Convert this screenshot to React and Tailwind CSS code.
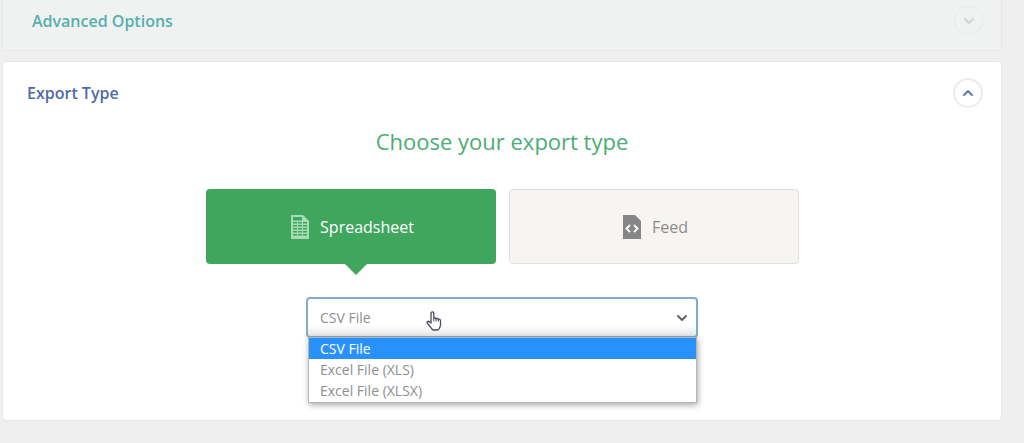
import React, { useState } from "react";
import { FiChevronDown, FiChevronUp } from "react-icons/fi";

const FORMATS = ["CSV File", "Excel File (XLS)", "Excel File (XLSX)"];

function SpreadsheetIcon() {
  return (
    <svg viewBox="0 0 18 24" className="h-6 w-[18px]" aria-hidden="true">
      <path fill="#a5dcb4" d="M0 0h12l6 6v18H0z" />
      <g fill="#41a65d">
        <path d="M2 2h9v3.500H2z" />
        {[7, 10, 13, 16, 19].map((y) => (
          <path
            key={y}
            d={`M2 ${y}h4v1.500H2zM7 ${y}h4v1.500H7zM12 ${y}h4v1.500h-4z`}
          />
        ))}
      </g>
    </svg>
  );
}

function FeedIcon() {
  return (
    <svg viewBox="0 0 18 24" className="h-6 w-[18px]" aria-hidden="true">
      <path fill="#868686" d="M0 0h12l6 6v18H0z" />
      <path
        d="M7 10l-3.500 3.500L7 17M11 10l3.500 3.500L11 17"
        fill="none"
        stroke="#f6f5f1"
        strokeWidth="2"
      />
    </svg>
  );
}

function HandCursor() {
  return (
    <svg viewBox="0 0 16 20" className="h-5 w-4" aria-hidden="true">
      <path
        d="M5 12V2.300a1.400 1.400 0 0 1 2.800 0V7.500c.3-1 2.200-.9 2.300.4.5-.8 2-.6 2.200.6.6-.6 2.200-.4 2.200 1.100v4.200c0 1.800-.9 2.600-1.200 3.600-.3 1-1 1.600-2 1.600H7.700c-1.200 0-1.700-.6-2.200-1.600L1.300 12c-.8-1.300.9-2.300 1.900-1.300z"
        fill="#fff"
        stroke="#4b4b57"
        strokeWidth="1.300"
        strokeLinejoin="round"
      />
      <path d="M7.800 7.500v3M10.100 8v2.500M12.300 8.700v2" stroke="#4b4b57" />
    </svg>
  );
}

export default function App() {
  const [type, setType] = useState("spreadsheet");
  const [format, setFormat] = useState("CSV File");
  const [open, setOpen] = useState(true);

  return (
    <div className="min-h-screen bg-[#efefef] pl-[2px] pr-[22px] font-['Open_Sans','Noto_Sans',sans-serif]">
      {/* Advanced Options */}
      <section className="flex items-start justify-between rounded-b border border-t-0 border-[#e6e7e7] bg-[#f0f2f1] pt-[6px] pr-[18px] pb-[15px] pl-[29px]">
        <h2 className="pt-1 text-[16px] leading-[22px] font-semibold text-[#55b0ac]">
          Advanced Options
        </h2>
        <button
          aria-label="Expand Advanced Options"
          className="flex h-[29px] w-[29px] items-center justify-center rounded-full border border-[#e9e9e8] text-[#d2d5d3]"
        >
          <FiChevronDown className="h-4 w-4" strokeWidth={3} />
        </button>
      </section>

      {/* Export Type */}
      <section className="mt-[10px] rounded border border-[#e7e7e7] bg-white pb-[82px]">
        <div className="flex items-center justify-between pt-4 pr-[18px] pl-6">
          <h2 className="text-[16px] leading-[22px] font-semibold text-[#4f6ba3]">
            Export Type
          </h2>
          <button
            aria-label="Collapse Export Type"
            className="flex h-[30px] w-[30px] items-center justify-center rounded-full border-2 border-[#ececec] text-[#6079b0]"
          >
            <FiChevronUp className="h-4 w-4" strokeWidth={3} />
          </button>
        </div>

        <h1 className="mt-[18px] text-center text-[22px] leading-[30px] text-[#4bad73]">
          Choose your export type
        </h1>

        <div className="mx-auto mt-[33px] grid max-w-[593px] grid-cols-2 gap-[13px]">
          <button
            onClick={() => setType("spreadsheet")}
            aria-pressed={type === "spreadsheet"}
            className="relative flex h-[75px] items-center justify-center gap-[11px] rounded bg-[#41a65d] pl-1 text-[16px] text-white"
          >
            <SpreadsheetIcon />
            Spreadsheet
            <svg
              viewBox="0 0 22 11"
              className="absolute top-full left-[139px] h-[11px] w-[22px]"
              aria-hidden="true"
            >
              <path fill="#41a65d" d="M0 0h22L11 11z" />
            </svg>
          </button>
          <button
            onClick={() => setType("feed")}
            aria-pressed={type === "feed"}
            className="flex h-[75px] items-center justify-center gap-[11px] rounded border border-[#e0e0dc] bg-[#f6f5f1] pl-1 text-[16px] text-[#8c8c8c]"
          >
            <FeedIcon />
            Feed
          </button>
        </div>

        <div className="relative mx-auto mt-[33px] max-w-[392px]">
          <select
            aria-label="File format"
            value={format}
            onChange={(e) => setFormat(e.target.value)}
            className="block h-[41px] w-full appearance-none rounded border-2 border-[#81abd0] bg-white bg-linear-to-b from-white from-70% to-[#e8e8e8] px-3 text-[14px] text-[#8e8e8e]"
          >
            {FORMATS.map((f) => (
              <option key={f}>{f}</option>
            ))}
          </select>
          <FiChevronDown
            className="pointer-events-none absolute top-[13px] right-2 h-4 w-4 text-[#666666]"
            strokeWidth={3}
          />
          {open && (
            <ul
              role="listbox"
              aria-label="File formats"
              className="absolute top-10 right-px left-[2px] border border-[#b5b5b5] bg-white pb-px text-[14px] leading-[21px] text-[#8e8e8e] shadow-[1px_2px_6px_rgba(0,0,0,0.35)]"
            >
              {FORMATS.map((f) => (
                <li
                  key={f}
                  role="option"
                  aria-selected={f === format}
                  onClick={() => {
                    setFormat(f);
                    setOpen(false);
                  }}
                  className={`px-[11px] ${f === format ? "bg-[#2991fb] text-white" : ""}`}
                >
                  {f}
                </li>
              ))}
            </ul>
          )}
          <span className="pointer-events-none absolute top-[14px] left-[120px]">
            <HandCursor />
          </span>
        </div>
      </section>
    </div>
  );
}
